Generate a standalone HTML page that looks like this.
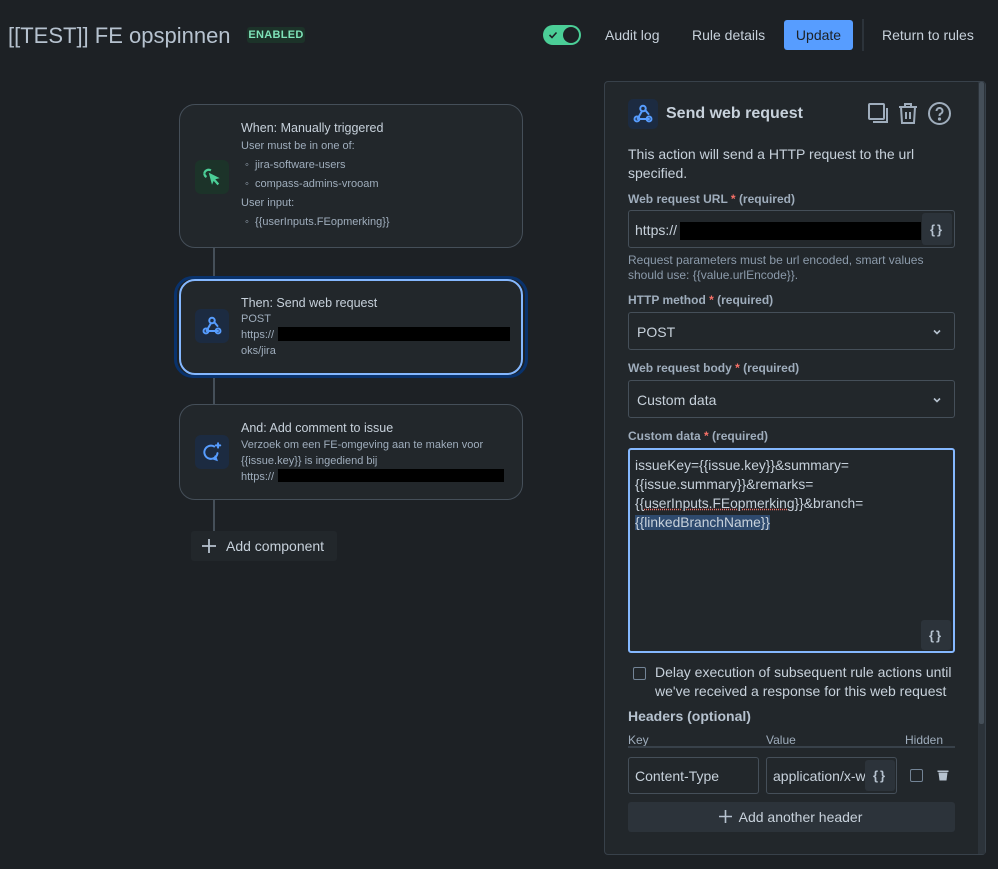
<!DOCTYPE html>
<html><head><meta charset="utf-8">
<style>
*{box-sizing:border-box;margin:0;padding:0}
body{width:998px;height:869px;background:#1d2125;font-family:"Liberation Sans",sans-serif;color:#b6c2cf;position:relative;overflow:hidden}
.a{position:absolute}
.card{position:absolute;left:179px;width:344px;background:#22272b;border:1px solid #454f59;border-radius:16px}
.ic{position:absolute;left:15px;width:34px;height:34px;border-radius:6px;display:flex;align-items:center;justify-content:center}
.ct{position:absolute;left:61px;font-size:12.5px;color:#c7d1db;white-space:nowrap}
.cs{font-size:11px;color:#9fadbc;line-height:19px}
.lbl{position:absolute;left:628px;font-size:12px;font-weight:bold;color:#9fadbc}
.lbl i{color:#f87168;font-style:normal}
.lbl span{font-weight:bold}
.inp{position:absolute;left:628px;width:327px;border:1px solid #454f59;border-radius:3px;background:#22272b;font-size:14px;color:#c7d1db}
.br{position:absolute;width:30px;height:32px;background:#2c333a;border-radius:3px;display:flex;align-items:center;justify-content:center;font-weight:bold;font-size:13px;color:#b6c2cf;letter-spacing:2px}
.vline{position:absolute;left:213px;width:2px;background:#454f59}
</style></head><body>
<div class="a" style="left:8px;top:23px;font-size:22px;color:#b6c2cf">[[TEST]] FE opspinnen</div>
<div class="a" style="left:247px;top:27px;width:58px;height:16px;background:#1c3329;border-radius:3px;color:#7ee2b8;font-size:11px;font-weight:bold;text-align:center;line-height:16px;letter-spacing:.3px">ENABLED</div>

<div class="a" style="left:543px;top:25px;width:38px;height:20px;background:#4bce97;border-radius:10px">
 <svg class="a" style="left:5px;top:5px" width="10" height="10" viewBox="0 0 10 10"><path d="M1.5 5l2.5 2.5 4.5-5" stroke="#1d2125" stroke-width="1.6" fill="none"/></svg>
 <div class="a" style="left:20px;top:2px;width:16px;height:16px;border-radius:8px;background:#1d2125"></div>
</div>
<div class="a" style="left:605px;top:27px;font-size:14px;color:#c7d1db">Audit log</div>
<div class="a" style="left:692px;top:27px;font-size:14px;color:#c7d1db">Rule details</div>
<div class="a" style="left:784px;top:20px;width:69px;height:30px;background:#579dff;border-radius:3px;color:#1d2125;font-size:14px;text-align:center;line-height:30px">Update</div>
<div class="a" style="left:862px;top:19px;width:2px;height:32px;background:#2c333a"></div>
<div class="a" style="left:882px;top:27px;font-size:14px;color:#c7d1db">Return to rules</div>

<div class="vline" style="top:248px;height:32px"></div>
<div class="vline" style="top:373px;height:31px"></div>
<div class="vline" style="top:500px;height:31px"></div>

<div class="card" style="top:104px;height:144px">
 <div class="ic" style="top:55px;background:#1c3329"><svg width="22" height="22" viewBox="0 0 20 20"><path d="M3 7a4 4 0 0 1 6-3" stroke="#4bce97" stroke-width="2" fill="none"/><path d="M3 7a4 4 0 0 0 2 3" stroke="#4bce97" stroke-width="2" fill="none"/><path d="M7 6l10 5-4 1 3.5 4-1.5 1.5-3.5-4-1.5 3.5z" fill="#4bce97"/></svg></div>
 <div class="ct" style="top:16px">When: Manually triggered</div>
 <div class="ct cs" style="top:32px">User must be in one of:<br><span style="padding-left:4px">◦&nbsp;&nbsp;jira-software-users</span><br><span style="padding-left:4px">◦&nbsp;&nbsp;compass-admins-vrooam</span><br>User input:<br><span style="padding-left:4px">◦&nbsp;&nbsp;{{userInputs.FEopmerking}}</span></div>
</div>

<div class="a" style="left:174px;top:276px;width:354px;height:102px;border:3px solid #09326c;border-radius:19px"></div>
<div class="card" style="top:279px;height:96px;border:2px solid #85b8ff">
 <div class="ic" style="left:14px;top:28px;background:#1c2b41"><svg width="22" height="22" viewBox="0 0 20 20" fill="none" stroke="#579dff" stroke-width="1.8" stroke-linecap="round"><circle cx="10" cy="5" r="2.5"/><circle cx="4.5" cy="14.5" r="2.2"/><circle cx="15.5" cy="14.5" r="2.2"/><path d="M9 7.5l-4 7M12 6.5l3 3.5M6.5 14.5h9"/></svg></div>
 <div class="ct" style="left:60px;top:15px">Then: Send web request</div>
 <div class="ct cs" style="left:60px;top:30px;line-height:16px">POST<br>https://<br>oks/jira</div>
 <div class="a" style="left:97px;top:46px;width:232px;height:14px;background:#000"></div>
</div>

<div class="card" style="top:404px;height:96px">
 <div class="ic" style="top:30px;background:#1c2b41"><svg width="22" height="22" viewBox="0 0 20 20" fill="none" stroke="#579dff" stroke-width="1.8" stroke-linecap="round"><path d="M15 11a6 6 0 1 1-3-6"/><path d="M11 16l3 1-1-3"/><path d="M15.5 2v4M13.5 4h4"/></svg></div>
 <div class="ct" style="top:16px">And: Add comment to issue</div>
 <div class="ct cs" style="top:32px;line-height:16px">Verzoek om een FE-omgeving aan te maken voor<br>{{issue.key}} is ingediend bij<br>https://</div>
 <div class="a" style="left:98px;top:64px;width:226px;height:13px;background:#000"></div>
</div>

<div class="a" style="left:191px;top:531px;width:146px;height:30px;background:#22272b;border-radius:3px;font-size:14px;color:#c7d1db;line-height:30px;padding-left:35px">Add component</div>
<svg class="a" style="left:201px;top:538px" width="16" height="16"><path d="M8 1v14M1 8h14" stroke="#b6c2cf" stroke-width="1.8"/></svg>

<div class="a" style="left:604px;top:81px;width:382px;height:774px;background:#22272b;border:1px solid #38414a;border-radius:4px"></div>
<div class="a" style="left:978px;top:82px;width:7px;height:772px;background:#2c333a"></div>
<div class="a" style="left:979px;top:82px;width:5px;height:642px;background:#454f59;border-radius:2px"></div>

<div class="a" style="left:628px;top:99px;width:30px;height:30px;background:#1c2b41;border-radius:5px;display:flex;align-items:center;justify-content:center"><svg width="22" height="22" viewBox="0 0 20 20" fill="none" stroke="#579dff" stroke-width="1.8" stroke-linecap="round"><circle cx="10" cy="5" r="2.5"/><circle cx="4.5" cy="14.5" r="2.2"/><circle cx="15.5" cy="14.5" r="2.2"/><path d="M9 7.5l-4 7M12 6.5l3 3.5M6.5 14.5h9"/></svg></div>
<div class="a" style="left:666px;top:105px;font-size:16px;font-weight:bold;color:#c7d1db">Send web request</div>
<svg class="a" style="left:867px;top:102px" width="24" height="24" viewBox="0 0 24 24" fill="none" stroke="#9fadbc" stroke-width="2"><rect x="2" y="2" width="15" height="15" rx="1"/><path d="M20 6v14H6"/></svg>
<svg class="a" style="left:897px;top:101px" width="22" height="24" viewBox="0 0 22 24" fill="none" stroke="#9fadbc" stroke-width="2"><path d="M2 6h18M8 6V3h6v3M4 6l1 16h12l1-16M9 11v7M13 11v7"/></svg>
<svg class="a" style="left:927px;top:101px" width="25" height="25" viewBox="0 0 25 25" fill="none" stroke="#9fadbc" stroke-width="2"><circle cx="12.5" cy="12.5" r="10.5"/><path d="M9.5 10a3 3 0 1 1 4 2.8c-1 .4-1 1.2-1 2.2"/><circle cx="12.5" cy="18" r=".6" fill="#9fadbc"/></svg>

<div class="a" style="left:628px;top:145px;font-size:14px;line-height:19px;color:#c7d1db;width:320px">This action will send a HTTP request to the url specified.</div>

<div class="lbl" style="top:192px">Web request URL <i>*</i> <span>(required)</span></div>
<div class="inp" style="top:210px;height:38px"><div class="a" style="left:6px;top:11px">https://</div></div>
<div class="a" style="left:680px;top:222px;width:241px;height:18px;background:#000"></div>
<div class="br" style="left:922px;top:213px">{}</div>
<div class="a" style="left:628px;top:253px;font-size:12px;line-height:15px;color:#8c9bab;width:320px">Request parameters must be url encoded, smart values should use: {{value.urlEncode}}.</div>

<div class="lbl" style="top:293px">HTTP method <i>*</i> <span>(required)</span></div>
<div class="inp" style="top:312px;height:38px"><div class="a" style="left:8px;top:11px">POST</div><svg class="a" style="left:303px;top:14px" width="10" height="10"><path d="M2 3.5l3 3 3-3" stroke="#b6c2cf" stroke-width="1.6" fill="none"/></svg></div>

<div class="lbl" style="top:361px">Web request body <i>*</i> <span>(required)</span></div>
<div class="inp" style="top:380px;height:38px"><div class="a" style="left:8px;top:11px">Custom data</div><svg class="a" style="left:303px;top:14px" width="10" height="10"><path d="M2 3.5l3 3 3-3" stroke="#b6c2cf" stroke-width="1.6" fill="none"/></svg></div>

<div class="lbl" style="top:429px">Custom data <i>*</i> <span>(required)</span></div>
<div class="inp" style="top:448px;height:205px;border:2px solid #85b8ff"><div class="a" style="left:5px;top:6px;line-height:19px;white-space:nowrap;font-size:13.8px">issueKey={{issue.key}}&amp;summary=<br>{{issue.summary}}&amp;remarks=<br>{{<span style="text-decoration:underline dotted #f87168">userInputs.FEopmerking</span>}}&amp;branch=<br><span style="background:#2e4a6e">{{linkedBranchName}}</span></div></div>
<div class="br" style="left:921px;top:620px;height:30px">{}</div>

<div class="a" style="left:633px;top:667px;width:13px;height:13px;border:1.5px solid #738496;border-radius:2px"></div>
<div class="a" style="left:655px;top:663px;font-size:14px;line-height:19px;color:#c7d1db">Delay execution of subsequent rule actions until<br>we've received a response for this web request</div>

<div class="a" style="left:628px;top:708px;font-size:14px;font-weight:bold;color:#b6c2cf">Headers (optional)</div>
<div class="a" style="left:628px;top:733px;font-size:12px;color:#9fadbc">Key</div>
<div class="a" style="left:766px;top:733px;font-size:12px;color:#9fadbc">Value</div>
<div class="a" style="left:905px;top:733px;font-size:12px;color:#9fadbc">Hidden</div>
<div class="a" style="left:628px;top:746px;width:327px;height:2px;background:#38414a"></div>

<div class="inp" style="top:757px;width:131px;height:37px"><div class="a" style="left:6px;top:10px">Content-Type</div></div>
<div class="inp" style="left:766px;top:757px;width:131px;height:37px;overflow:hidden"><div class="a" style="left:6px;top:10px;white-space:nowrap">application/x-w</div></div>
<div class="br" style="left:865px;top:760px;height:31px">{}</div>
<div class="a" style="left:910px;top:769px;width:13px;height:13px;border:1.5px solid #738496;border-radius:2px"></div>
<svg class="a" style="left:937px;top:769px" width="12" height="12" viewBox="0 0 12 12"><path d="M0.5 1.5h11v1.5h-11zM1.5 3.5h9l-1 8h-7z" fill="#b6c2cf"/></svg>

<div class="a" style="left:628px;top:802px;width:327px;height:30px;background:#2c333a;border-radius:3px;font-size:14px;color:#c7d1db;text-align:center;line-height:30px;padding-left:18px">Add another header</div>
<svg class="a" style="left:719px;top:810px" width="13" height="13"><path d="M6.5 0v13M0 6.5h13" stroke="#b6c2cf" stroke-width="1.6"/></svg>
</body></html>
